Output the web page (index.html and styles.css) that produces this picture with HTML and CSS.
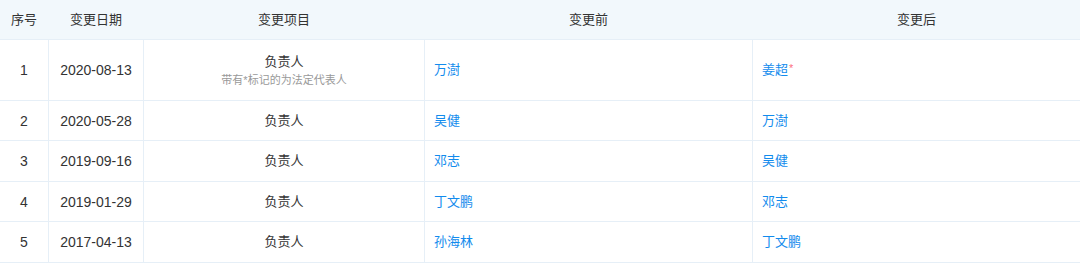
FILE: index.html
```html
<!DOCTYPE html>
<html lang="zh">
<head>
<meta charset="utf-8">
<link rel="stylesheet" href="styles.css">
</head>
<body>
<div class="table">
  <div class="row head">
    <div class="cell c">序号</div>
    <div class="cell c">变更日期</div>
    <div class="cell c">变更项目</div>
    <div class="cell c">变更前</div>
    <div class="cell c">变更后</div>
  </div>
  <div class="row tall">
    <div class="cell c num">1</div>
    <div class="cell c num">2020-08-13</div>
    <div class="cell c stack"><span>负责人</span><span class="note">带有*标记的为法定代表人</span></div>
    <div class="cell l"><span class="link">万澍</span></div>
    <div class="cell l"><span class="link">姜超</span><sup class="star">*</sup></div>
  </div>
  <div class="row">
    <div class="cell c num">2</div>
    <div class="cell c num">2020-05-28</div>
    <div class="cell c">负责人</div>
    <div class="cell l"><span class="link">吴健</span></div>
    <div class="cell l"><span class="link">万澍</span></div>
  </div>
  <div class="row odd">
    <div class="cell c num">3</div>
    <div class="cell c num">2019-09-16</div>
    <div class="cell c">负责人</div>
    <div class="cell l"><span class="link">邓志</span></div>
    <div class="cell l"><span class="link">吴健</span></div>
  </div>
  <div class="row">
    <div class="cell c num">4</div>
    <div class="cell c num">2019-01-29</div>
    <div class="cell c">负责人</div>
    <div class="cell l"><span class="link">丁文鹏</span></div>
    <div class="cell l"><span class="link">邓志</span></div>
  </div>
  <div class="row odd">
    <div class="cell c num">5</div>
    <div class="cell c num">2017-04-13</div>
    <div class="cell c">负责人</div>
    <div class="cell l"><span class="link">孙海林</span></div>
    <div class="cell l"><span class="link">丁文鹏</span></div>
  </div>
</div>
</body>
</html>
```
FILE: styles.css
```css
html, body {
  margin: 0;
  padding: 0;
  background: #fff;
}
body {
  font-family: "Liberation Sans", "Noto Sans CJK SC", sans-serif;
  font-size: 13px;
  color: #333;
}
.table {
  width: 1080px;
}
.row {
  display: grid;
  grid-template-columns: 49px 95px 281px 328px 1fr;
  height: 40px;
  border-bottom: 1px solid #e6eff7;
  box-sizing: border-box;
}
.row.head {
  background: #f2f8fc;
  height: 40px;
}
.row.tall {
  height: 61px;
}
.row.odd {
  height: 41px;
}
.cell {
  display: flex;
  align-items: center;
  border-right: 1px solid #e6eff7;
  box-sizing: border-box;
  line-height: 18px;
}
.cell:last-child {
  border-right: none;
}
.head .cell {
  border-right-color: transparent;
}
.num {
  font-size: 14px;
}
.c {
  justify-content: center;
  text-align: center;
}
.l {
  justify-content: flex-start;
  padding-left: 9px;
}
.stack {
  flex-direction: column;
  justify-content: center;
  gap: 1px;
}
.note {
  font-size: 11px;
  color: #999;
  line-height: 16px;
}
.link {
  color: #128bed;
}
.star {
  color: #fd6f7f;
  font-size: 11px;
  line-height: 1;
  align-self: flex-start;
  margin-top: 23px;
  margin-left: 1px;
}
```
